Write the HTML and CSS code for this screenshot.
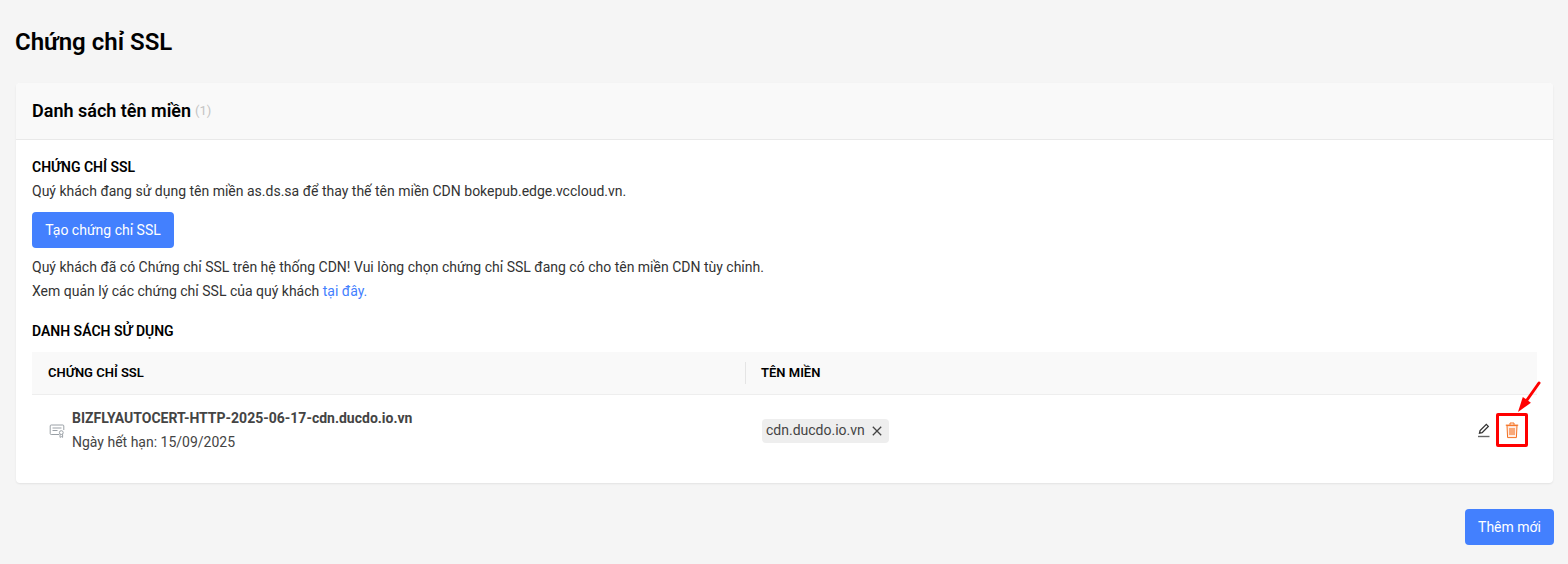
FILE: index.html
```html
<!DOCTYPE html>
<html lang="vi">
<head>
<meta charset="utf-8">
<title>Chứng chỉ SSL</title>
<link rel="stylesheet" href="styles.css">
</head>
<body>
<main class="page">
  <h1 class="page-title">Chứng chỉ SSL</h1>
  <section class="card">
    <header class="card-head">
      <h2 class="card-title">Danh sách tên miền</h2>
      <span class="count">(1)</span>
    </header>
    <div class="card-body">
      <h3 class="section-title">CHỨNG CHỈ SSL</h3>
      <p class="line first">Quý khách đang sử dụng tên miền as.ds.sa để thay thế tên miền CDN bokepub.edge.vccloud.vn.</p>
      <button class="btn btn-create">Tạo chứng chỉ SSL</button>
      <p class="line notice">Quý khách đã có Chứng chỉ SSL trên hệ thống CDN! Vui lòng chọn chứng chỉ SSL đang có cho tên miền CDN tùy chỉnh.</p>
      <p class="line">Xem quản lý các chứng chỉ SSL của quý khách <a class="link" href="#">tại đây.</a></p>
      <h3 class="section-title usage">DANH SÁCH SỬ DỤNG</h3>
      <div class="table">
        <div class="thead">
          <div class="th th-cert">CHỨNG CHỈ SSL</div>
          <div class="th th-domain">TÊN MIỀN</div>
        </div>
        <div class="row">
          <div class="cell-cert">
            <svg class="cert-icon" width="16" height="16" viewBox="0 0 16 16" fill="none" stroke="#9aa0a6" stroke-width="1">
              <path d="M10 11.5H2.2a1 1 0 0 1-1-1V3a1 1 0 0 1 1-1h11.6a1 1 0 0 1 1 1v4"/>
              <path d="M3.5 5h9M3.5 7.5h5"/>
              <circle cx="12.3" cy="9.6" r="1.9"/>
              <path d="M11 11.2v3.2l1.3-.8 1.3.8v-3.2"/>
            </svg>
            <div>
              <div class="cert-name">BIZFLYAUTOCERT-HTTP-2025-06-17-cdn.ducdo.io.vn</div>
              <div class="cert-exp">Ngày hết hạn: 15/09/2025</div>
            </div>
          </div>
          <div class="cell-domain">
            <span class="tag">cdn.ducdo.io.vn
              <svg class="tag-x" width="10" height="10" viewBox="0 0 10 10" stroke="#444" stroke-width="1.3"><path d="M.8.8l8.4 8.4M9.2.8L.8 9.2"/></svg>
            </span>
          </div>
          <div class="cell-actions">
            <svg class="edit-icon" width="14" height="15" viewBox="0 0 14 15" fill="none" stroke="#333" stroke-width="1.3">
              <path d="M2.5 10.2l.6-2.6L9.3 1.4l2 2-6.2 6.2z"/>
              <path d="M1 13.5h11.5" stroke="#666" stroke-width="1.4"/>
            </svg>
            <span class="delete-box">
              <svg width="14" height="17" viewBox="0 0 14 17" fill="#ffeee6" stroke="#f5701f" stroke-width="1">
                <path d="M5 2.8V1h4v1.8" fill="none"/>
                <path d="M.8 3.2h12.4" stroke-width="1.2"/>
                <path d="M2 3.6l.6 12h8.8l.6-12z"/>
                <path d="M5 6v7M7 6v7M9 6v7" stroke-width="1.1"/>
              </svg>
              <svg class="arrow" width="26" height="32" viewBox="0 0 26 32">
                <path d="M11 19L23 2" fill="none" stroke="#f00" stroke-width="3" stroke-linecap="round"/>
                <path d="M2 31L6.8 15.9 14.9 21.7z" fill="#f00"/>
              </svg>
            </span>
          </div>
        </div>
      </div>
    </div>
  </section>
  <div class="page-foot">
    <button class="btn btn-add">Thêm mới</button>
  </div>
</main>
</body>
</html>
```
FILE: styles.css
```css
* { box-sizing: border-box; }
html, body { margin: 0; height: 100%; }
body {
  background: #f5f5f5;
  font-family: Roboto, "Liberation Sans", sans-serif;
  font-size: 14px;
  color: #333;
  overflow: hidden;
}
.page { padding: 0 14px 0 16px; }
.page-title {
  margin: 0 0 0 -1px;
  padding-top: 28px;
  height: 83px;
  font-size: 24px;
  line-height: 28px;
  font-weight: 600;
  color: #000;
}
.card {
  margin-right: 1px;
  background: #fff;
  border-radius: 4px;
  box-shadow: 0 1px 2px rgba(0, 0, 0, .08);
  height: 400px;
  overflow: hidden;
}
.card-head {
  display: flex;
  align-items: center;
  height: 57px;
  padding: 0 16px 2px;
  background: #f9f9f9;
  border-bottom: 1px solid #e9e9e9;
}
.card-title {
  margin: 0;
  font-size: 18px;
  font-weight: 600;
  color: #000;
}
.count { margin-left: 4px; font-size: 13px; color: #c4c4c4; }
.card-body { padding: 18px 16px 0; }
.section-title {
  margin: 0;
  font-size: 14px;
  line-height: 18px;
  font-weight: 600;
  color: #000;
}
.line { margin: 0; line-height: 24px; }
.first { margin-top: 3px; }
.btn {
  border: 0;
  border-radius: 4px;
  background: #4380fe;
  color: #fff;
  font: 400 14px/36px Roboto, "Liberation Sans", sans-serif;
  height: 36px;
  padding: 0 13px;
}
.btn-create { display: block; margin-top: 9px; width: 142px; padding: 0; }
.notice { margin-top: 7px; }
.link { color: #4380fe; text-decoration: none; }
.usage { margin-top: 19px; }
.table { margin-top: 12px; }
.thead {
  display: flex;
  align-items: center;
  height: 43px;
  background: #f9f9f9;
  border-bottom: 1px solid #eee;
}
.th {
  font-size: 13px;
  font-weight: 600;
  line-height: 22px;
  color: #000;
}
.th-cert { width: 713px; padding-left: 16px; }
.th-domain {
  flex: 1;
  padding-left: 15px;
  border-left: 1px solid #e5e5e5;
}
.row {
  display: flex;
  align-items: center;
  height: 70px;
}
.cell-cert {
  display: flex;
  align-items: center;
  gap: 7px;
  width: 714px;
  padding-left: 17px;
}
.cert-icon { flex: none; margin-top: 1px; }
.cert-name { font-weight: 700; color: #444; line-height: 24px; }
.cert-exp { line-height: 24px; color: #444; }
.cell-domain { flex: 1; padding: 1px 0 0 16px; }
.tag {
  display: inline-flex;
  align-items: center;
  gap: 7px;
  height: 24px;
  padding: 0 4px 2px;
  border-radius: 4px;
  background: #eee;
  color: #444;
}
.tag-x { margin: 3px 3px 0 0; }
.cell-actions {
  display: flex;
  align-items: center;
  gap: 5px;
  padding-right: 9px;
}
.delete-box {
  position: relative;
  display: flex;
  align-items: center;
  justify-content: center;
  width: 32px;
  height: 34px;
  border: 3px solid #f00;
  border-radius: 2px;
  background: #fff;
}
.arrow { position: absolute; left: 17px; top: -35px; }
.page-foot {
  display: flex;
  justify-content: flex-end;
  margin-top: 26px;
}
.btn-add { width: 89px; padding: 0; }
```
